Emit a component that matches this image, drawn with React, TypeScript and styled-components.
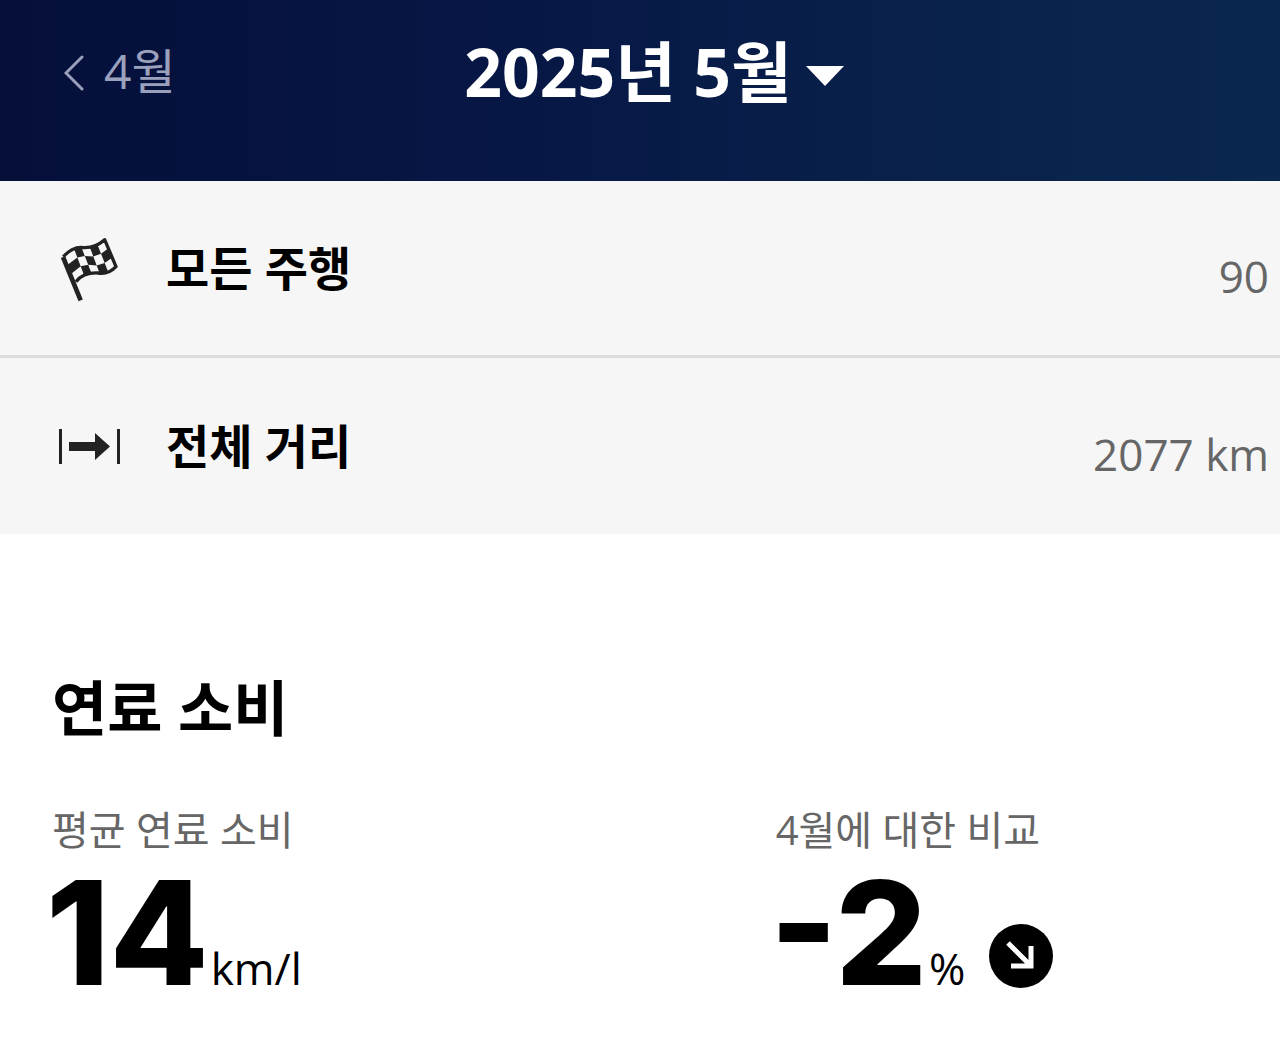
import React from "react";
import styled, { createGlobalStyle } from "styled-components";

const Global = createGlobalStyle`
  * { box-sizing: border-box; }
  body { margin: 0; background: #fff; color: #000; font-family: "Open Sans", "Noto Sans CJK KR", sans-serif; }
  h1, h2, p, dl, dt, dd { margin: 0; }
`;

const Button = styled.button`
  display: flex;
  align-items: center;
  padding: 0;
  border: 0;
  background: none;
  font-family: inherit;
  cursor: pointer;
`;

const Header = styled.header`
  display: grid;
  grid-template-columns: 1fr auto 1fr;
  align-items: center;
  padding: 31px 36px 70px 64px;
  background: linear-gradient(90deg, #050f3a 0%, #071745 40%, #08204a 68%, #0a2750 100%);
`;

const Previous = styled(Button)`
  gap: 20px;
  color: #9ba1bd;
  font-size: 48px;
  line-height: 80px;

  svg { margin-top: 4px; }
`;

const Heading = styled.h1`
  font-size: 66px;
  line-height: 80px;
`;

const Month = styled(Button)`
  gap: 14px;
  color: #fff;
  font-size: inherit;
  font-weight: 700;
  line-height: inherit;

  svg { margin-top: 10px; }
`;

const Summary = styled.dl`
  background: #f6f6f6;
`;

const Row = styled.div`
  display: flex;
  align-items: center;
  padding: 55px 11px;

  & + & {
    padding-block: 56px;
    border-top: 3px solid #dcdcdc;
  }
`;

const Label = styled.dt`
  display: flex;
  flex: 1;
  align-items: center;
  gap: 44px;
  padding-left: 47px;
  font-size: 47px;
  font-weight: 700;
  line-height: 64px;
`;

const IconBox = styled.span`
  display: grid;
  place-items: center;
  width: 64px;
  height: 64px;
`;

const Value = styled.dd`
  align-self: flex-end;
  height: 56px;
  color: #666;
  font-size: 44px;
  line-height: 64px;
`;

const Section = styled.section`
  padding: 134px 52px 32px;
`;

const Title = styled.h2`
  font-size: 60px;
  font-weight: 700;
  line-height: 80px;
`;

const Metrics = styled.div`
  display: grid;
  grid-template-columns: 8fr 5fr;
  margin-top: 54px;
`;

const Caption = styled.p`
  color: #666;
  font-size: 40px;
  line-height: 56px;
`;

const Figure = styled.p`
  display: flex;
  align-items: baseline;
  gap: 2px;
  margin-left: -6px;
`;

const Big = styled.strong`
  font-family: Inter, sans-serif;
  font-size: 144px;
  font-weight: 800;
  line-height: 150px;
`;

const Unit = styled.span`
  font-size: 44px;
  line-height: 64px;
`;

const TrendIcon = styled.svg`
  align-self: flex-end;
  margin: 0 0 20px 22px;
`;

const flagTop = [[70, 106], [102, 83], [124, 78], [150, 80], [172, 70], [194, 54]];
const flagBottom = [[106, 184], [132, 162], [155, 158], [180, 160], [205, 154], [229, 137]];

function edge(column: number, row: number) {
  const [tx, ty] = flagTop[column];
  const [bx, by] = flagBottom[column];
  const t = row / 3;
  return `${tx + (bx - tx) * t},${ty + (by - ty) * t}`;
}

function FlagIcon() {
  const cells = [];
  for (let row = 0; row < 3; row++) {
    for (let column = 0; column < 5; column++) {
      if ((row + column) % 2 === 0) {
        cells.push([edge(column, row), edge(column + 1, row), edge(column + 1, row + 1), edge(column, row + 1)].join(" "));
      }
    }
  }
  const outline = "M70 107Q95 79 124 79Q162 84 194 56L228 137Q204 162 174 156Q130 154 108 182";
  return (
    <svg width="64" height="66" viewBox="54 45 192 198" aria-hidden="true">
      <path d={outline} fill="#222" />
      {cells.map((points) => <polygon key={points} points={points} fill="#f6f6f6" />)}
      <path d={outline} fill="none" stroke="#222" strokeWidth="10" strokeLinejoin="round" />
      <path d="M69 108L122 238" stroke="#222" strokeWidth="14" />
    </svg>
  );
}

function DistanceIcon() {
  return (
    <svg width="64" height="38" viewBox="0 0 64 38" fill="#222" aria-hidden="true">
      <path d="M1 2h3v35H1zM59 2h3v35h-3zM11 15h26V6l15 13.500L37 33v-9H11z" />
    </svg>
  );
}

export default function App() {
  return (
    <>
      <Global />
      <Header>
        <Previous type="button">
          <svg width="20" height="36" viewBox="0 0 20 36" fill="none" stroke="currentColor" strokeWidth="3" strokeLinecap="round" aria-hidden="true">
            <path d="M18 2 2 18l16 16" />
          </svg>
          4월
        </Previous>
        <Heading>
          <Month type="button">
            2025년 5월
            <svg width="38" height="22" viewBox="0 0 38 22" fill="currentColor" aria-hidden="true">
              <path d="M0 1h38L19 21z" />
            </svg>
          </Month>
        </Heading>
      </Header>
      <main>
        <Summary>
          <Row>
            <Label><IconBox><FlagIcon /></IconBox>모든 주행</Label>
            <Value>90</Value>
          </Row>
          <Row>
            <Label><IconBox><DistanceIcon /></IconBox>전체 거리</Label>
            <Value>2077 km</Value>
          </Row>
        </Summary>
        <Section>
          <Title>연료 소비</Title>
          <Metrics>
            <div>
              <Caption>평균 연료 소비</Caption>
              <Figure><Big>14</Big><Unit>km/l</Unit></Figure>
            </div>
            <div>
              <Caption>4월에 대한 비교</Caption>
              <Figure>
                <Big>-2</Big><Unit>%</Unit>
                <TrendIcon width="64" height="64" viewBox="0 0 64 64" role="img" aria-label="감소">
                  <circle cx="32" cy="32" r="32" fill="#000" />
                  <path d="M19 19l23 23M42 22v20H22" fill="none" stroke="#fff" strokeWidth="5" />
                </TrendIcon>
              </Figure>
            </div>
          </Metrics>
        </Section>
      </main>
    </>
  );
}
